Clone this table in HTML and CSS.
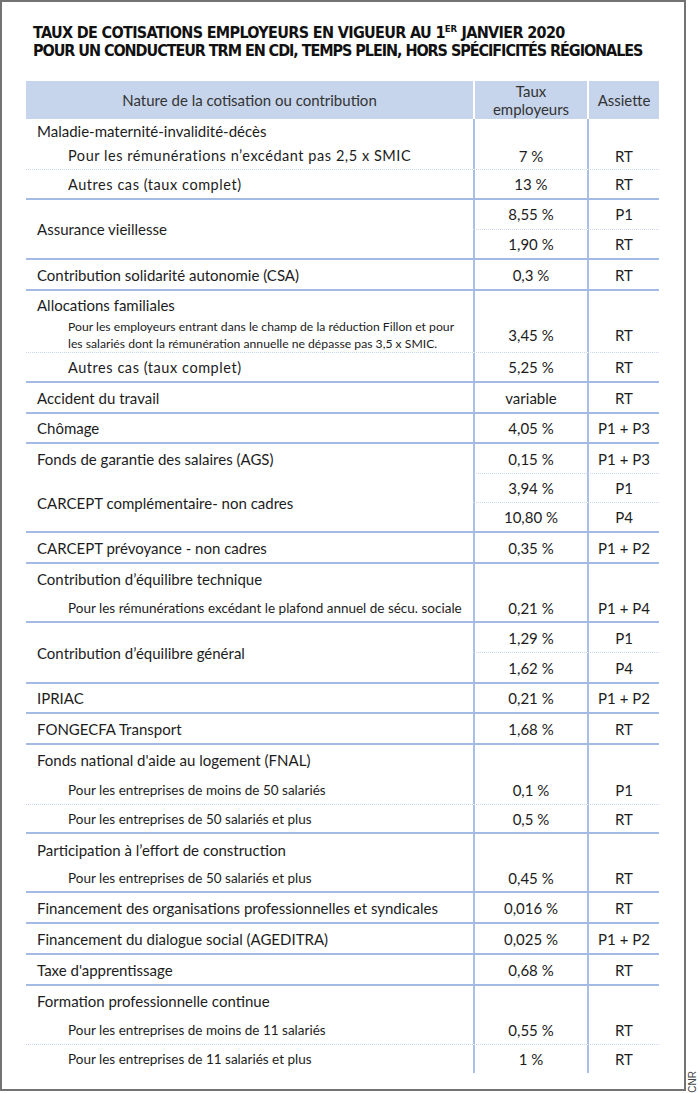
FILE: index.html
```html
<!DOCTYPE html>
<html lang="fr">
<head>
<meta charset="utf-8">
<title>Taux de cotisations employeurs 2020</title>
<link rel="stylesheet" href="styles.css">
</head>
<body>
<div class="page">
  <div class="frame">
    <h1 class="title"><span class="line l1">TAUX DE COTISATIONS EMPLOYEURS EN VIGUEUR AU 1<span class="sup">ER</span> JANVIER 2020</span><span class="line l2">POUR UN CONDUCTEUR TRM EN CDI, TEMPS PLEIN, HORS SPÉCIFICITÉS RÉGIONALES</span></h1>
    <div class="table">
      <div class="row head h38">
        <div class="c1">Nature de la cotisation ou contribution</div>
        <div class="c2">Taux<br>employeurs</div>
        <div class="c3">Assiette</div>
      </div>

      <div class="row h23"><div class="c1">Maladie-maternité-invalidité-décès</div><div class="c2"></div><div class="c3"></div></div>
      <div class="row h28 bl"><div class="c1 sub wide">Pour les rémunérations n’excédant pas 2,5 x SMIC</div><div class="c2">7 %</div><div class="c3">RT</div></div>
      <div class="row h30 bd"><div class="c1 sub wide">Autres cas (taux complet)</div><div class="c2">13 %</div><div class="c3">RT</div></div>

      <div class="row split h60 bd">
        <div class="c1">Assurance vieillesse</div>
        <div class="vals">
          <div class="pair bl"><div class="c2">8,55 %</div><div class="c3">P1</div></div>
          <div class="pair"><div class="c2">1,90 %</div><div class="c3">RT</div></div>
        </div>
      </div>

      <div class="row h31 bd"><div class="c1">Contribution solidarité autonomie (CSA)</div><div class="c2">0,3 %</div><div class="c3">RT</div></div>

      <div class="row h27"><div class="c1">Allocations familiales</div><div class="c2"></div><div class="c3"></div></div>
      <div class="row h35 bl"><div class="c1 sub small">Pour les employeurs entrant dans le champ de la réduction Fillon et pour<br>les salariés dont la rémunération annuelle ne dépasse pas 3,5 x SMIC.</div><div class="c2">3,45 %</div><div class="c3">RT</div></div>
      <div class="row h30 bd"><div class="c1 sub wide">Autres cas (taux complet)</div><div class="c2">5,25 %</div><div class="c3">RT</div></div>

      <div class="row h31 bd"><div class="c1">Accident du travail</div><div class="c2">variable</div><div class="c3">RT</div></div>
      <div class="row h30 bd"><div class="c1">Chômage</div><div class="c2">4,05 %</div><div class="c3">P1 + P3</div></div>
      <div class="row h30 blr"><div class="c1">Fonds de garantie des salaires (AGS)</div><div class="c2">0,15 %</div><div class="c3">P1 + P3</div></div>

      <div class="row split h59 bd">
        <div class="c1">CARCEPT complémentaire- non cadres</div>
        <div class="vals">
          <div class="pair bl"><div class="c2">3,94 %</div><div class="c3">P1</div></div>
          <div class="pair"><div class="c2">10,80 %</div><div class="c3">P4</div></div>
        </div>
      </div>

      <div class="row h31 bd"><div class="c1">CARCEPT prévoyance - non cadres</div><div class="c2">0,35 %</div><div class="c3">P1 + P2</div></div>

      <div class="row h30"><div class="c1">Contribution d’équilibre technique</div><div class="c2"></div><div class="c3"></div></div>
      <div class="row h29 bd"><div class="c1 sub">Pour les rémunérations excédant le plafond annuel de sécu. sociale</div><div class="c2">0,21 %</div><div class="c3">P1 + P4</div></div>

      <div class="row split h61 bd">
        <div class="c1">Contribution d’équilibre général</div>
        <div class="vals">
          <div class="pair bl"><div class="c2">1,29 %</div><div class="c3">P1</div></div>
          <div class="pair"><div class="c2">1,62 %</div><div class="c3">P4</div></div>
        </div>
      </div>

      <div class="row h30 bd"><div class="c1">IPRIAC</div><div class="c2">0,21 %</div><div class="c3">P1 + P2</div></div>
      <div class="row h31 bd"><div class="c1">FONGECFA Transport</div><div class="c2">1,68 %</div><div class="c3">RT</div></div>

      <div class="row h30"><div class="c1">Fonds national d'aide au logement (FNAL)</div><div class="c2"></div><div class="c3"></div></div>
      <div class="row h30 bl"><div class="c1 sub">Pour les entreprises de moins de 50 salariés</div><div class="c2">0,1 %</div><div class="c3">P1</div></div>
      <div class="row h29 bd"><div class="c1 sub">Pour les entreprises de 50 salariés et plus</div><div class="c2">0,5 %</div><div class="c3">RT</div></div>

      <div class="row h31"><div class="c1">Participation à l’effort de construction</div><div class="c2"></div><div class="c3"></div></div>
      <div class="row h28 bd"><div class="c1 sub">Pour les entreprises de 50 salariés et plus</div><div class="c2">0,45 %</div><div class="c3">RT</div></div>

      <div class="row h31 bd"><div class="c1">Financement des organisations professionnelles et syndicales</div><div class="c2">0,016 %</div><div class="c3">RT</div></div>
      <div class="row h31 bd"><div class="c1">Financement du dialogue social (AGEDITRA)</div><div class="c2">0,025 %</div><div class="c3">P1 + P2</div></div>
      <div class="row h31 bd"><div class="c1">Taxe d'apprentissage</div><div class="c2">0,68 %</div><div class="c3">RT</div></div>

      <div class="row h30"><div class="c1">Formation professionnelle continue</div><div class="c2"></div><div class="c3"></div></div>
      <div class="row h29 bl"><div class="c1 sub">Pour les entreprises de moins de 11 salariés</div><div class="c2">0,55 %</div><div class="c3">RT</div></div>
      <div class="row h28"><div class="c1 sub">Pour les entreprises de 11 salariés et plus</div><div class="c2">1 %</div><div class="c3">RT</div></div>
    </div>
  </div>
  <div class="credit">CNR</div>
</div>
</body>
</html>
```

FILE: styles.css
```css
* { box-sizing: border-box; }

html, body {
  margin: 0;
  padding: 0;
  background: #ffffff;
}

body {
  font-family: "Lato", "Open Sans", sans-serif;
  color: #1c1c1c;
}

.page {
  display: flex;
  align-items: flex-end;
  width: 700px;
  height: 1093px;
}

.frame {
  width: 686px;
  height: 1091px;
  border: 2px solid #737373;
  padding: 22px 0 0 0;
  align-self: flex-start;
}

.title {
  margin: 0 0 0 31px;
  font-family: "Liberation Sans Narrow", "DejaVu Sans Condensed", "Open Sans", sans-serif;
  font-stretch: condensed;
  font-weight: 700;
  font-size: 16px;
  line-height: 18px;
  color: #111;
  white-space: nowrap;
}

.title .line { display: block; }
.title .l1 { letter-spacing: -0.66px; }
.title .l2 { letter-spacing: -1.05px; }

.sup {
  font-size: 9.5px;
  vertical-align: 6px;
  line-height: 0;
  letter-spacing: 0;
}

.table {
  margin: 21px 0 0 24px;
  width: 633px;
  display: flex;
  flex-direction: column;
}

.row {
  display: grid;
  grid-template-columns: 447px 114px 72px;
  font-size: 15px;
}

.row > div,
.pair > div {
  display: flex;
  align-items: center;
}

.c1 { padding-left: 11px; }
.c1.sub { padding-left: 42px; font-size: 13.5px; }
.c1.sub.wide { font-size: 14.5px; letter-spacing: 0.55px; }
.c1.small {
  font-size: 12.2px;
  line-height: 17px;
  letter-spacing: 0;
  white-space: nowrap;
}

.c2, .c3 {
  justify-content: center;
  text-align: center;
  border-left: 2px solid #a9bfe7;
}

.head {
  background: #c6d5ec;
  color: #333;
  font-size: 15px;
  line-height: 18px;
}
.head > .c1 { justify-content: center; padding-left: 0; }
.head > .c2, .head > .c3 { border-left: 2px solid #ffffff; }

.split { grid-template-columns: 447px 186px; }
.vals {
  display: flex;
  flex-direction: column;
  align-items: stretch !important;
}
.pair {
  flex: 1;
  display: grid;
  grid-template-columns: 114px 72px;
}

.bd { border-bottom: 2px solid #a3bae5; }
.bl { border-bottom: 1px dotted #c9d6ee; }
.blr > .c2, .blr > .c3 { border-bottom: 1px dotted #c9d6ee; }

.h23 { height: 23px; }
.h27 { height: 27px; }
.h28 { height: 28px; }
.h29 { height: 29px; }
.h30 { height: 30px; }
.h31 { height: 31px; }
.h35 { height: 35px; }
.h38 { height: 38px; }
.h59 { height: 59px; }
.h60 { height: 60px; }
.h61 { height: 61px; }

.credit {
  width: 14px;
  padding-bottom: 3px;
  writing-mode: vertical-rl;
  transform: rotate(180deg);
  font-family: "Liberation Sans", sans-serif;
  font-size: 10px;
  color: #444;
  line-height: 14px;
}
```
